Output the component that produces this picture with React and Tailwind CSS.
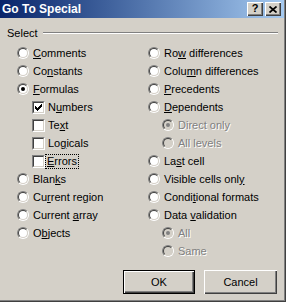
const FONT = { fontFamily: '"Liberation Sans", Arial, sans-serif' };

function Radio({ checked, disabled }) {
  return (
    <span className="relative block w-[12px] h-[12px] shrink-0 rounded-full border border-t-[#808080] border-l-[#808080] border-b-white border-r-white">
      <span
        className={
          disabled
            ? "absolute inset-0 rounded-full border border-t-[#404040] border-l-[#404040] border-b-[#D4D0C8] border-r-[#D4D0C8] bg-[#D4D0C8]"
            : "absolute inset-0 rounded-full border border-t-[#404040] border-l-[#404040] border-b-[#D4D0C8] border-r-[#D4D0C8] bg-white"
        }
      />
      {checked && (
        <span
          className={
            disabled
              ? "absolute left-[3px] top-[3px] w-[4px] h-[4px] rounded-full bg-[#808080]"
              : "absolute left-[3px] top-[3px] w-[4px] h-[4px] rounded-full bg-black"
          }
        />
      )}
    </span>
  );
}

function Check({ checked }) {
  const cols = [2, 3, 4, 3, 2, 1, 0];
  return (
    <span className="relative block w-[13px] h-[13px] shrink-0 border border-t-[#808080] border-l-[#808080] border-b-white border-r-white">
      <span className="absolute inset-0 border border-t-[#404040] border-l-[#404040] border-b-[#D4D0C8] border-r-[#D4D0C8] bg-white" />
      {checked && (
        <svg
          className="absolute left-[2px] top-[2px]"
          width="7"
          height="7"
          viewBox="0 0 7 7"
          shapeRendering="crispEdges"
        >
          {cols.map((y, x) => (
            <rect key={x} x={x} y={y} width="1" height="3" fill="#000" />
          ))}
        </svg>
      )}
    </span>
  );
}

// label with one underlined access key
function Label({ text, k, disabled }) {
  const i = k == null ? -1 : text.indexOf(k);
  const body =
    i < 0 ? (
      text
    ) : (
      <>
        {text.slice(0, i)}
        <span className="underline underline-offset-[1px]">{text[i]}</span>
        {text.slice(i + 1)}
      </>
    );
  return (
    <span
      className={
        disabled
          ? "text-[#808080] [text-shadow:1px_1px_0_#fff] whitespace-nowrap"
          : "text-black whitespace-nowrap"
      }
    >
      {body}
    </span>
  );
}

function Row({ type = "radio", indent = 0, checked, disabled, text, k, focus }) {
  return (
    <div className="flex items-center h-[18px]" style={{ paddingLeft: indent }}>
      {type === "radio" ? (
        <Radio checked={checked} disabled={disabled} />
      ) : (
        <Check checked={checked} />
      )}
      {focus ? (
        <span className="ml-0 h-[15px] flex items-center px-[1px] border border-dotted border-black">
          <Label text={text} k={k} disabled={disabled} />
        </span>
      ) : (
        <span className={type === "radio" ? "ml-[4px]" : "ml-[3px]"}>
          <Label text={text} k={k} disabled={disabled} />
        </span>
      )}
    </div>
  );
}

const left = [
  { text: "Comments", k: "C" },
  { text: "Constants", k: "n" },
  { text: "Formulas", k: "F", checked: true },
  { type: "check", indent: 15, text: "Numbers", k: "u", checked: true },
  { type: "check", indent: 15, text: "Text", k: "x" },
  { type: "check", indent: 15, text: "Logicals", k: "g" },
  { type: "check", indent: 15, text: "Errors", k: "E", focus: true },
  { text: "Blanks", k: "k" },
  { text: "Current region", k: "r" },
  { text: "Current array", k: "a" },
  { text: "Objects", k: "b" },
];

const right = [
  { text: "Row differences", k: "w" },
  { text: "Column differences", k: "m" },
  { text: "Precedents", k: "P" },
  { text: "Dependents", k: "D" },
  { indent: 14, text: "Direct only", disabled: true, checked: true },
  { indent: 14, text: "All levels", disabled: true },
  { text: "Last cell", k: "s" },
  { text: "Visible cells only", k: "y" },
  { text: "Conditional formats", k: "t" },
  { text: "Data validation", k: "v" },
  { indent: 14, text: "All", disabled: true, checked: true },
  { indent: 14, text: "Same", disabled: true },
];

function CaptionButton({ children }) {
  return (
    <div className="w-[16px] h-[14px] bg-[#D4D0C8] flex items-center justify-center shadow-[inset_1px_1px_0_#fff,inset_-1px_-1px_0_#404040,inset_-2px_-2px_0_#808080]">
      {children}
    </div>
  );
}

export default function App() {
  return (
    <div
      className="w-[286px] h-[302px] bg-[#D4D0C8] flex flex-col text-[11px] shadow-[inset_-1px_-1px_0_#404040,inset_-2px_-2px_0_#808080] overflow-hidden"
      style={FONT}
    >
      {/* title bar */}
      <div className="w-[284px] h-[18px] flex items-center justify-between pl-[2px] pr-[3px] bg-gradient-to-r from-[#0A246A] to-[#A6CAF0]">
        <span className="text-white font-bold text-[12px] leading-none">
          Go To Special
        </span>
        <div className="flex gap-[2px]">
          <CaptionButton>
            <span className="text-black font-bold text-[11px] leading-none mt-[-1px]">
              ?
            </span>
          </CaptionButton>
          <CaptionButton>
            <svg width="8" height="7" viewBox="0 0 8 7">
              <path d="M0.5 0.5L7.5 6.5M7.5 0.5L0.5 6.5" stroke="#000" strokeWidth="1.7" />
            </svg>
          </CaptionButton>
        </div>
      </div>

      {/* group caption */}
      <div className="flex items-center h-[14px] mt-[8px] pl-[7px] pr-[8px]">
        <span className="text-black leading-none">Select</span>
        <div className="flex-1 ml-[5px] h-[2px] border-t border-t-[#808080] border-b border-b-white" />
      </div>

      {/* options */}
      <div className="flex mt-[4px]">
        <div className="w-[148px] pl-[17px] flex flex-col">
          {left.map((r) => (
            <Row key={r.text} {...r} />
          ))}
        </div>
        <div className="flex-1 flex flex-col">
          {right.map((r, i) => (
            <Row key={i} {...r} />
          ))}
        </div>
      </div>

      {/* buttons */}
      <div className="flex justify-end gap-[9px] mt-[10px] pr-[9px]">
        <button className="w-[72px] h-[24px] bg-[#D4D0C8] border border-black text-black shadow-[inset_1px_1px_0_#fff,inset_-1px_-1px_0_#404040,inset_-2px_-2px_0_#808080]">
          OK
        </button>
        <button className="w-[73px] h-[24px] bg-[#D4D0C8] text-black shadow-[inset_1px_1px_0_#fff,inset_-1px_-1px_0_#404040,inset_-2px_-2px_0_#808080]">
          Cancel
        </button>
      </div>
    </div>
  );
}
